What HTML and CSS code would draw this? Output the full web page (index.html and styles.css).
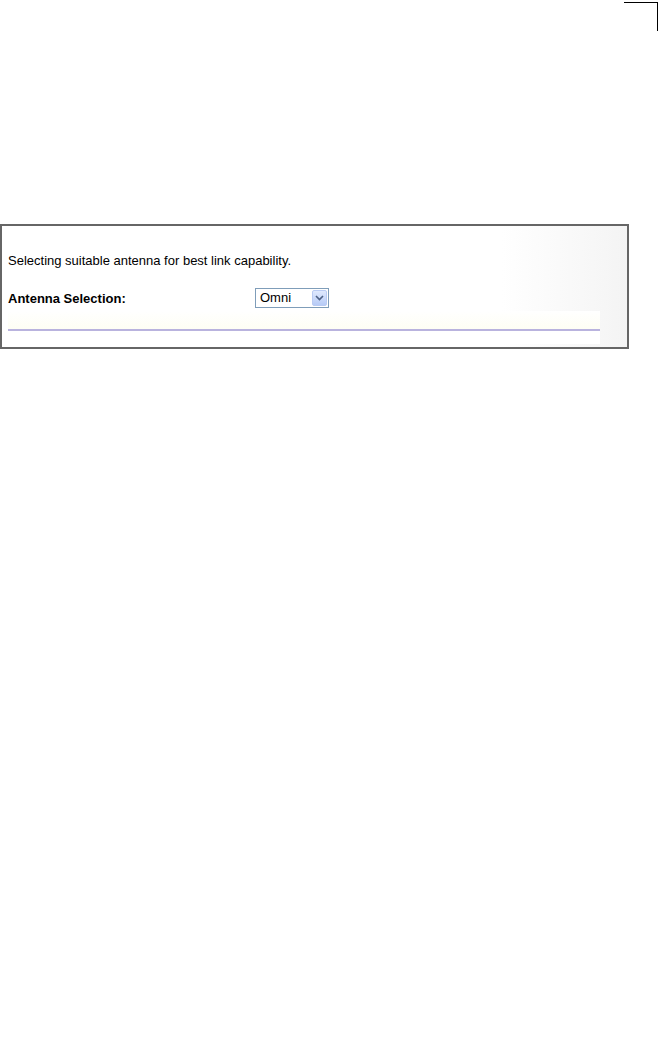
FILE: index.html
```html
<!DOCTYPE html>
<html lang="en">
<head>
    <meta charset="UTF-8">
    <meta name="viewport" content="width=device-width, initial-scale=1.0">
    <title>Antenna Selection</title>
    <link rel="stylesheet" href="styles.css">
</head>
<body>

<div class="page-top">
    <div class="crop-mark"></div>
</div>

<div class="panel">
    <p class="intro">Selecting suitable antenna for best link capability.</p>

    <div class="field-row">
        <label class="field-label" for="antenna">Antenna Selection:</label>
        <div class="select-box" id="antenna">
            <span class="select-value">Omni</span>
            <span class="select-arrow">
                <svg width="9" height="6" viewBox="0 0 9 6">
                    <path d="M1 1 L4.5 4.5 L8 1" fill="none" stroke="#4d6185" stroke-width="1.6"/>
                </svg>
            </span>
        </div>
    </div>

    <div class="panel-footer">
        <div class="footer-band"></div>
        <div class="footer-line"></div>
        <div class="footer-space"></div>
    </div>
</div>

</body>
</html>
```

FILE: styles.css
```css
body {
    font-family: 'Liberation Sans', Arial, sans-serif;
    font-size: 13px;
    color: #000;
    background-color: #ffffff;
    margin: 0;
}

.page-top {
    height: 224px;
    display: flex;
    justify-content: flex-end;
    align-items: flex-start;
    padding-top: 2px;
    box-sizing: border-box;
}

.crop-mark {
    width: 33px;
    height: 28px;
    border-top: 1px solid #000;
    border-right: 1px solid #000;
    margin-right: 1px;
}

.panel {
    width: 629px;
    box-sizing: border-box;
    border: 2px solid #666666;
    background: linear-gradient(to right, #ffffff 80%, #f4f4f4 100%);
    padding: 27px 27px 3px 6px;
}

.intro {
    margin: 0;
    line-height: 16px;
}

.field-row {
    display: flex;
    align-items: center;
    margin-top: 19px;
    height: 20px;
}

.field-label {
    width: 247px;
    font-weight: bold;
}

.select-box {
    width: 74px;
    height: 20px;
    box-sizing: border-box;
    border: 1px solid #7f9db9;
    background-color: #ffffff;
    display: flex;
    align-items: center;
    justify-content: space-between;
    padding: 0 1px 0 4px;
}

.select-value {
    line-height: 14px;
}

.select-arrow {
    width: 15px;
    height: 16px;
    box-sizing: border-box;
    border: 1px solid #b9cbf3;
    border-radius: 2px;
    background: linear-gradient(#dfe9fd, #b7cbf6);
    display: flex;
    align-items: center;
    justify-content: center;
}

.panel-footer {
    margin-top: 3px;
    background-color: #ffffff;
}

.footer-band {
    height: 18px;
    background: linear-gradient(#ffffff, #fefef4);
}

.footer-line {
    height: 2px;
    background-color: #b9b3de;
}

.footer-space {
    height: 13px;
}
```
